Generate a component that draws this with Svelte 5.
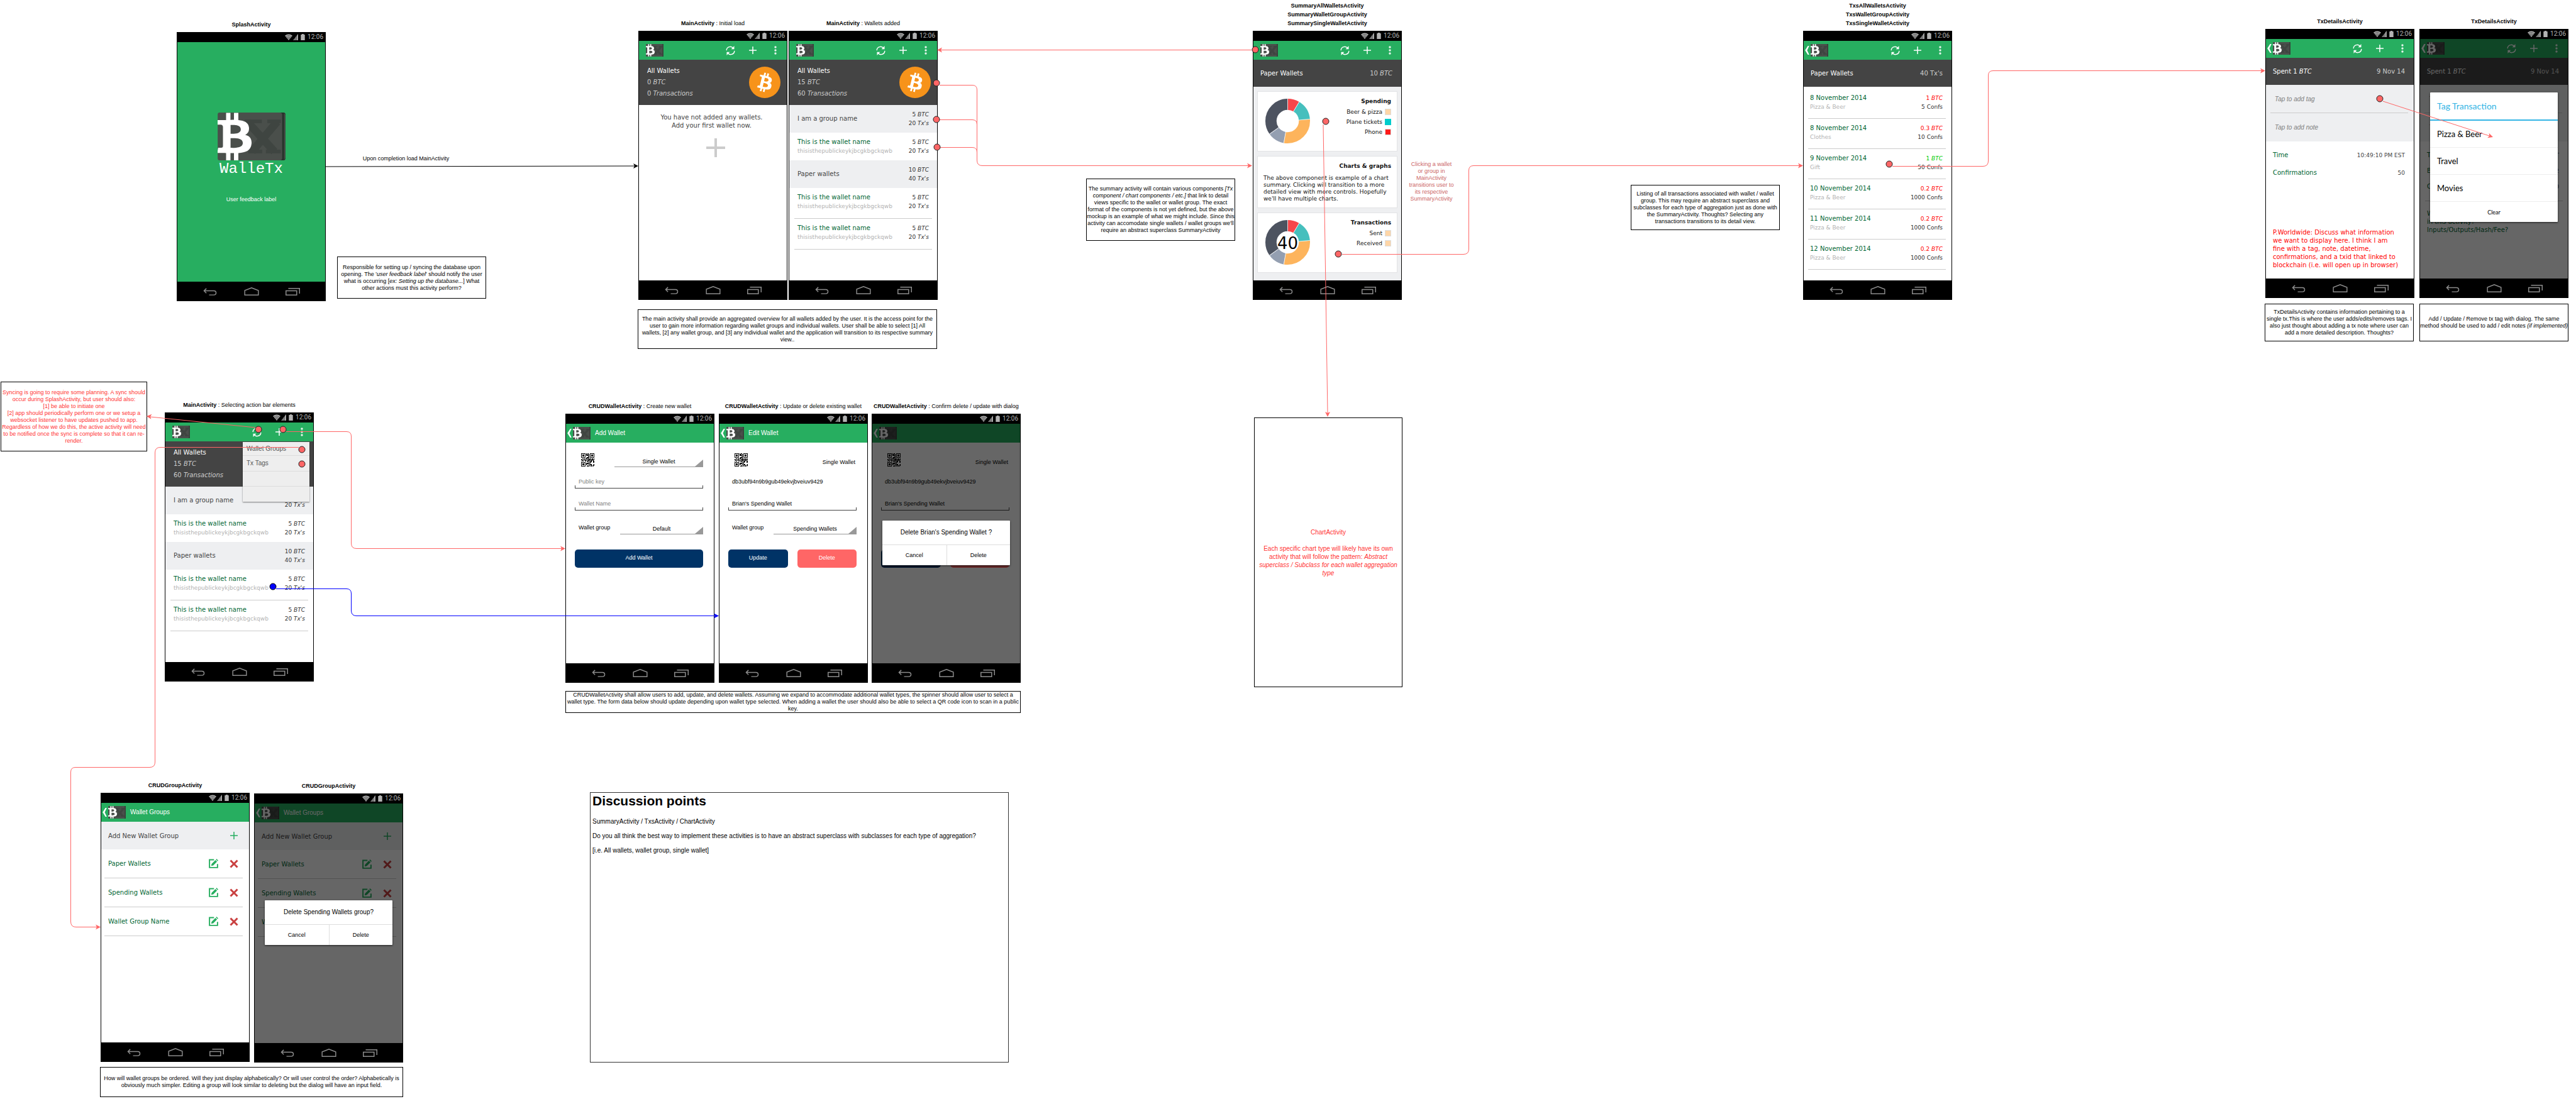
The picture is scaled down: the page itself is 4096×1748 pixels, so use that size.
<script>
  // Places a board item on the free canvas.
  const at = (x, y, w, h) =>
    `left:${x}px;top:${y}px` + (w ? `;width:${w}px` : '') + (h ? `;min-height:${h}px` : '');

  const publicKey = 'thisisthepublickeykjbcgkbgckqwb';
  const walletName = 'This is the wallet name';

  const walletRows = [
    { group: true, name: 'I am a group name', btc: 5, txs: 20 },
    { name: walletName, key: publicKey, btc: 5, txs: 20 },
    { group: true, name: 'Paper wallets', btc: 10, txs: 40 },
    { name: walletName, key: publicKey, btc: 5, txs: 20, ruled: true },
    { name: walletName, key: publicKey, btc: 5, txs: 20, ruled: true }
  ];

  const transactions = [
    { date: '8 November 2014', tag: 'Pizza & Beer', btc: '1', confs: 5 },
    { date: '8 November 2014', tag: 'Clothes', btc: '0.3', confs: 10 },
    { date: '9 November 2014', tag: 'Gift', btc: '1', confs: 50, received: true },
    { date: '10 November 2014', tag: 'Pizza & Beer', btc: '0.2', confs: 1000 },
    { date: '11 November 2014', tag: 'Pizza & Beer', btc: '0.2', confs: 1000 },
    { date: '12 November 2014', tag: 'Pizza & Beer', btc: '0.2', confs: 1000 }
  ];

  const groups = ['Paper Wallets', 'Spending Wallets', 'Wallet Group Name'];
  const tags = ['Pizza & Beer', 'Travel', 'Movies'];

  // Donut slices in degrees, clockwise from the top.
  const slices = [
    { from: 0, to: 31, color: '#f7464a' },
    { from: 31, to: 85, color: '#46bfbd' },
    { from: 85, to: 190, color: '#fdb45c' },
    { from: 190, to: 234, color: '#949fb1' },
    { from: 234, to: 360, color: '#4d5360' }
  ];

  // 21 x 21 QR symbol: three finder squares and a fixed scatter of modules.
  const finder = (x, y) => {
    for (const [fx, fy] of [[0, 0], [14, 0], [0, 14]]) {
      const dx = x - fx;
      const dy = y - fy;
      if (dx >= -1 && dx <= 7 && dy >= -1 && dy <= 7) {
        const ring = Math.max(Math.abs(dx - 3), Math.abs(dy - 3));
        return ring === 3 || ring <= 1 ? 1 : 0;
      }
    }
    return -1;
  };
  let qrPath = '';
  for (let y = 0; y < 21; y++) {
    for (let x = 0; x < 21; x++) {
      const f = finder(x, y);
      if (f === 1 || (f === -1 && (x * 7 + y * 13 + ((x * y * 5) % 11)) % 5 < 3)) {
        qrPath += `M${x} ${y}h1v1h-1z`;
      }
    }
  }

  const coral = '#ff6666';
  const lines = [
    { d: 'M518 265L1009 264', color: '#000', tip: [1015, 264, 0] },
    { d: 'M1990 79.5H1496', color: coral, tip: [1490, 79.5, 180] },
    { d: 'M1494 135.5H1546Q1553.5 135.5 1553.5 143V255Q1553.5 263.5 1562 263.5H1985', color: coral, tip: [1991, 263.5, 0] },
    { d: 'M1494 190.5H1546Q1553.5 190.5 1553.5 198', color: coral },
    { d: 'M1494 234.5H1546Q1553.5 234.5 1553.5 242', color: coral },
    { d: 'M2104 198L2111 657', color: coral, tip: [2111, 663, 90] },
    { d: 'M2134 404.5H2327Q2335.5 404.5 2335.5 396V271Q2335.5 263.5 2343 263.5H2861', color: coral, tip: [2867, 263.5, 0] },
    { d: 'M3009 264.5H3153Q3161.5 264.5 3161.5 256V120Q3161.5 112.5 3169 112.5H3596', color: coral, tip: [3602, 112.5, 0] },
    { d: 'M3789 161L3958 216', color: coral, tip: [3964, 218, 18] },
    { d: 'M406 680L239 663', color: coral, tip: [233, 662, 186] },
    { d: 'M455 686.5H551Q558.5 686.5 558.5 694V864Q558.5 872.5 567 872.5H893', color: coral, tip: [899, 872.5, 0] },
    { d: 'M475 711.5H255Q246.5 711.5 246.5 720V1212Q246.5 1220.5 238 1220.5H120Q112.5 1220.5 112.5 1228V1466Q112.5 1474.5 121 1474.5H154', color: coral, tip: [160, 1474.5, 0] },
    { d: 'M439 936.5H551Q558.5 936.5 558.5 944V971Q558.5 979.5 567 979.5H1137', color: '#0000ff', tip: [1143, 979.5, 0] }
  ];

  const dots = [
    [1489, 132], [1489, 190], [1490, 234], [1996, 79], [2108, 193], [2128, 404],
    [3004, 261], [3784, 157], [411, 683], [450, 683], [480, 715], [480, 738]
  ];
</script>

{#snippet bitcoin()}
  <path
    fill="#fff"
    d="M23.189 14.02c.314-2.096-1.283-3.223-3.465-3.975l.708-2.84-1.728-.43-.69 2.765c-.454-.114-.92-.22-1.385-.326l.695-2.783L15.596 6l-.708 2.839c-.376-.086-.746-.17-1.104-.26l.002-.009-2.384-.595-.46 1.846s1.283.294 1.256.312c.7.175.826.638.805 1.006l-.806 3.235c.048.012.11.03.18.057l-.183-.045-1.13 4.532c-.086.212-.303.531-.793.41.018.025-1.256-.313-1.256-.313l-.858 1.978 2.25.561c.418.105.828.215 1.231.318l-.715 2.872 1.727.43.708-2.84c.472.127.93.245 1.378.357l-.706 2.828 1.728.43.715-2.866c2.948.558 5.164.333 6.097-2.333.752-2.146-.037-3.385-1.588-4.192 1.13-.26 1.98-1.003 2.207-2.538zm-3.95 5.538c-.533 2.147-4.148.986-5.32.695l.95-3.805c1.172.293 4.929.872 4.37 3.11zm.535-5.569c-.487 1.953-3.495.96-4.47.717l.86-3.45c.975.243 4.118.696 3.61 2.733z"
  />
{/snippet}

{#snippet logo()}
  <svg class="logo" viewBox="0 0 146 103" aria-hidden="true">
    <rect width="146" height="103" rx="4" fill="#4a4f4b" />
    <path d="M134 0h7q5 0 5 5v93q0 5-5 5h-7q5 0 5-5V5q0-5-5-5z" fill="#27332b" />
    <path d="M143 2q3 1 3 4v91q0 3-3 4z" fill="#454a46" />
    <path
      d="M64 20L122 84M128 20L74 84"
      stroke="#3f4541"
      stroke-width="17"
      fill="none"
    />
    <path d="M58 15h37v8H58zM107 15h29v8h-29zM66 80h30v8H66zM104 80h32v8h-32z" fill="#3f4541" />
    <g transform="translate(33 51.5) scale(5.3) rotate(-14) translate(-16 -16)">
      {@render bitcoin()}
    </g>
  </svg>
{/snippet}

{#snippet coin()}
  <svg class="coin" viewBox="0 0 32 32" role="img" aria-label="Bitcoin">
    <circle cx="16" cy="16" r="16" fill="#f7931a" />
    {@render bitcoin()}
  </svg>
{/snippet}

{#snippet statusBar()}
  <div class="status">
    <svg width="12" height="10" viewBox="0 0 16 13" aria-hidden="true">
      <path d="M0 3.4Q8-2.6 16 3.4L8 13z" fill="#b3b3b3" />
      <path d="M1.8 5.6Q8 1.2 14.2 5.6M3.6 7.9Q8 4.8 12.4 7.9M5.5 10Q8 8.4 10.5 10" fill="none" stroke="#000" stroke-width=".8" />
    </svg>
    <svg width="8" height="10" viewBox="0 0 10 13" aria-hidden="true">
      <path d="M0 13L10 0V13z" fill="#b3b3b3" />
      <path d="M2.4 0v13M4.6 0v13M6.8 0v13" stroke="#000" stroke-width=".7" />
    </svg>
    <svg class="battery" width="7" height="10" viewBox="0 0 9 14" aria-hidden="true">
      <path d="M2.5 0h4v1.5H9V14H0V1.5h2.5z" fill="#b3b3b3" />
    </svg>
    <span>12:06</span>
  </div>
{/snippet}

{#snippet navBar()}
  <nav class="nav" aria-label="System">
    <button aria-label="Back">
      <svg width="22" height="12" viewBox="0 0 30 16"><path d="M7 1L2 6L7 11M2 6H23Q28 6 28 10.500T23 15H13" /></svg>
    </button>
    <button aria-label="Home">
      <svg width="24" height="13" viewBox="0 0 32 18"><path d="M1 17V7L16 1L31 7V17Z" /></svg>
    </button>
    <button aria-label="Recent apps">
      <svg width="23" height="12" viewBox="0 0 31 16"><path d="M1 6H24V15H1ZM6 1H30V12" /></svg>
    </button>
  </nav>
{/snippet}

{#snippet actionBar(title, back, tools)}
  <header class="action">
    <button class="home" class:back aria-label={back ? 'Up' : 'WalleTx'}>
      {#if back}
        <svg width="7" height="14" viewBox="0 0 9 19" aria-hidden="true">
          <path d="M9 0H6L0 9.500L6 19H9L4.500 9.500z" fill="#fff" />
        </svg>
      {/if}
      {@render logo()}
    </button>
    {#if title}<h3>{title}</h3>{/if}
    {#if tools}
      <div class="tools">
        <button aria-label="Refresh">
          <svg width="15" height="15" viewBox="0 0 20 20">
            <path d="M1.500 9.500Q2 2.500 9 1.800Q13 1.500 16 5M18.500 10.500Q18 17.500 11 18.200Q7 18.500 4 15" fill="none" stroke="#fff" stroke-width="1.900" />
            <path d="M18 0V7H11.500zM2 20V13H8.500z" fill="#fff" />
          </svg>
        </button>
        <button aria-label="Add">
          <svg width="12" height="12" viewBox="0 0 12 12"><path d="M6 0V12M0 6H12" stroke="#fff" stroke-width="1.500" /></svg>
        </button>
        <button aria-label="More">
          <svg width="4" height="14" viewBox="0 0 4 14" fill="#e6f5ec">
            <circle cx="2" cy="2" r="1.700" /><circle cx="2" cy="7" r="1.700" /><circle cx="2" cy="12" r="1.700" />
          </svg>
        </button>
      </div>
    {/if}
  </header>
{/snippet}

{#snippet totals(btc, txs)}
  <section class="totals">
    <div>
      <p class="strong">All Wallets</p>
      <p>{btc} <em>BTC</em></p>
      <p>{txs} <em>Transactions</em></p>
    </div>
    {@render coin()}
  </section>
{/snippet}

{#snippet walletList()}
  <ul class="rows">
    {#each walletRows as row}
      <li class:group={row.group} class:ruled={row.ruled}>
        <div class="lead">
          <span class="name">{row.name}</span>
          {#if row.key}<span class="sub">{row.key}</span>{/if}
        </div>
        <div class="figures">
          <span>{row.btc} <em>BTC</em></span>
          <span>{row.txs} <em>Tx's</em></span>
        </div>
      </li>
    {/each}
  </ul>
{/snippet}

{#snippet donut(label)}
  <div class="donut">
    <svg width="71" height="71" viewBox="0 0 96 96" aria-hidden="true">
      {#each slices as s}
        <circle
          cx="48" cy="48" r="36" fill="none" stroke={s.color} stroke-width="24" pathLength="360"
          stroke-dasharray="{s.to - s.from} 360" stroke-dashoffset={-s.from} transform="rotate(-90 48 48)"
        />
      {/each}
      {#each slices as s}
        <path d="M48 0V24" stroke="#fff" stroke-width="1" transform="rotate({s.from} 48 48)" />
      {/each}
    </svg>
    {#if label}<strong>{label}</strong>{/if}
  </div>
{/snippet}

{#snippet qr()}
  <svg class="qr" viewBox="0 0 21 21" role="img" aria-label="Scan QR code"><path d={qrPath} /></svg>
{/snippet}

{#snippet groupList()}
  <div class="addgroup">
    <span>Add New Wallet Group</span>
    <button aria-label="Add wallet group">
      <svg width="12" height="12" viewBox="0 0 12 12"><path d="M6 0V12M0 6H12" stroke="#27ae60" stroke-width="1.500" /></svg>
    </button>
  </div>
  <ul class="groups">
    {#each groups as name}
      <li>
        <span>{name}</span>
        <button aria-label="Edit {name}">
          <svg width="15" height="15" viewBox="0 0 20 20">
            <path d="M11 2H1.500V18.500H18.500V11" fill="none" stroke="#27ae60" stroke-width="2.600" />
            <path d="M5 15l1-4.500L14 2.500l3.500 3.500L9.500 14zM15 1.500L16.500 0 20 3.500 18.500 5z" fill="#27ae60" />
          </svg>
        </button>
        <button aria-label="Delete {name}">
          <svg width="14" height="14" viewBox="0 0 14 14"><path d="M1.500 1.500L12.500 12.500M12.500 1.500L1.500 12.500" stroke="#c94040" stroke-width="3" /></svg>
        </button>
      </li>
    {/each}
  </ul>
{/snippet}

{#snippet confirm(question)}
  <div class="dialog" role="dialog" aria-label={question}>
    <p>{question}</p>
    <div class="choices">
      <button>Cancel</button>
      <button>Delete</button>
    </div>
  </div>
{/snippet}

{#snippet editForm(id)}
  <form class="form">
    <div class="kind">
      {@render qr()}
      <span>Single Wallet</span>
    </div>
    <output class="field plain">db3ubf94n9b9gub49ekvjbveiuv9429</output>
    <div class="field">
      <input aria-label="Wallet name" value="Brian's Spending Wallet" />
    </div>
    <div class="pick">
      <label for={id}>Wallet group</label>
      <div class="select narrow"><select {id}><option>Spending Wallets</option></select></div>
    </div>
    <div class="buttons">
      <button type="button" class="primary">Update</button>
      <button type="button" class="danger">Delete</button>
    </div>
  </form>
{/snippet}

{#snippet txHeader(left, unit, right, rightUnit)}
  <section class="txheader">
    <span>{left}{#if unit}&nbsp;<em>{unit}</em>{/if}</span>
    <span class="muted">{right}{#if rightUnit}&nbsp;<em>{rightUnit}</em>{/if}</span>
  </section>
{/snippet}

<main class="board">
  <!-- Splash -->
  <figure class="screen" style={at(281, 32)}>
    <figcaption><b>SplashActivity</b></figcaption>
    <div class="phone">
      {@render statusBar()}
      <div class="splash">
        {@render logo()}
        <h1>WalleTx</h1>
        <p>User feedback label</p>
      </div>
      {@render navBar()}
    </div>
  </figure>
  <p class="label" style={at(527, 247, 237)}>Upon completion load MainActivity</p>
  <div class="note" style={at(536, 408, 237, 67)}>
    <p>
      Responsible for setting up / syncing the database upon<br />
      opening. The '<em>user feedback label</em>' should notify the user<br />
      what is occurring [<em>ex: Setting up the database...</em>] What<br />
      other actions must this activity perform?
    </p>
  </div>

  <!-- Main -->
  <figure class="screen" style={at(1015, 30)}>
    <figcaption><b>MainActivity</b> : Initial load</figcaption>
    <div class="phone">
      {@render statusBar()}
      {@render actionBar('', false, true)}
      {@render totals(0, 0)}
      <div class="empty">
        <p>You have not added any wallets.<br />Add your first wallet now.</p>
        <button aria-label="Add wallet">
          <svg width="30" height="30" viewBox="0 0 30 30"><path d="M15 0V30M0 15H30" stroke="#ccc" stroke-width="4" /></svg>
        </button>
      </div>
      {@render navBar()}
    </div>
  </figure>
  <figure class="screen" style={at(1254, 30)}>
    <figcaption><b>MainActivity</b> : Wallets added</figcaption>
    <div class="phone">
      {@render statusBar()}
      {@render actionBar('', false, true)}
      {@render totals(15, 60)}
      {@render walletList()}
      {@render navBar()}
    </div>
  </figure>
  <div class="note" style={at(1014, 492, 476, 63)}>
    <p>
      The main activity shall provide an aggregated overview for all wallets added by the user. It is the access point for the<br />
      user to gain more information regarding wallet groups and individual wallets. User shall be able to select [1] All<br />
      wallets, [2] any wallet group, and [3] any individual wallet and the application will transition to its respective summary<br />
      view..
    </p>
  </div>

  <!-- Summary -->
  <figure class="screen" style={at(1992, 2)}>
    <figcaption class="stack">
      <b>SummaryAllWalletsActivity</b>
      <b>SummaryWalletGroupActivity</b>
      <b>SummarySingleWalletActivity</b>
    </figcaption>
    <div class="phone">
      {@render statusBar()}
      {@render actionBar('', false, true)}
      {@render txHeader('Paper Wallets', '', '10', 'BTC')}
      <div class="cards">
        <section class="card chart">
          {@render donut('')}
          <div class="legend">
            <h4>Spending</h4>
            <ul>
              <li>Beer &amp; pizza<i class="peach"></i></li>
              <li>Plane tickets<i class="cyan"></i></li>
              <li>Phone<i class="red"></i></li>
            </ul>
          </div>
        </section>
        <section class="card text">
          <h4>Charts &amp; graphs</h4>
          <p>
            The above component is example of a chart<br />
            summary. Clicking will transition to a more<br />
            detailed view with more controls. Hopefully<br />
            we'll have multiple charts.
          </p>
        </section>
        <section class="card chart">
          {@render donut('40')}
          <div class="legend">
            <h4>Transactions</h4>
            <ul>
              <li>Sent<i class="peach"></i></li>
              <li>Received<i class="peach"></i></li>
            </ul>
          </div>
        </section>
      </div>
      {@render navBar()}
    </div>
  </figure>
  <div class="note" style={at(1727, 284, 237, 99)}>
    <p>
      The summary activity will contain various components <em>[Tx</em><br />
      <em>component / chart components / etc.]</em> that link to detail<br />
      views specific to the wallet or wallet group. The exact<br />
      format of the components is not yet defined, but the above<br />
      mockup is an example of what we might include. Since this<br />
      activity can accomodate single wallets / wallet groups we'll<br />
      require an abstract superclass SummaryActivity
    </p>
  </div>
  <p class="label rose" style={at(2226, 256, 100)}>
    Clicking a wallet<br />or group in<br />MainActivity<br />transitions user to<br />its respective<br />SummaryActivity
  </p>

  <!-- Transactions -->
  <figure class="screen" style={at(2867, 2)}>
    <figcaption class="stack">
      <b>TxsAllWalletsActivity</b>
      <b>TxsWalletGroupActivity</b>
      <b>TxsSingleWalletActivity</b>
    </figcaption>
    <div class="phone">
      {@render statusBar()}
      {@render actionBar('', true, true)}
      {@render txHeader('Paper Wallets', '', "40 Tx's", '')}
      <ul class="rows txs">
        {#each transactions as tx}
          <li class="ruled">
            <div class="lead">
              <span class="name">{tx.date}</span>
              <span class="sub">{tx.tag}</span>
            </div>
            <div class="figures">
              <span class={tx.received ? 'in' : 'out'}>{tx.btc} <em>BTC</em></span>
              <span>{tx.confs} Confs</span>
            </div>
          </li>
        {/each}
      </ul>
      {@render navBar()}
    </div>
  </figure>
  <div class="note" style={at(2593, 294, 237, 72)}>
    <p>
      Listing of all transactions associated with wallet / wallet<br />
      group. This may require an abstract superclass and<br />
      subclasses for each type of aggregation just as done with<br />
      the SummaryActivity. Thoughts? Selecting any<br />
      transactions transitions to its detail view.
    </p>
  </div>

  <!-- Transaction details -->
  <figure class="screen" style={at(3602, 27)}>
    <figcaption><b>TxDetailsActivity</b></figcaption>
    <div class="phone">
      {@render statusBar()}
      {@render actionBar('', true, true)}
      {@render txHeader('Spent 1', 'BTC', '9 Nov 14', '')}
      <div class="taps">
        <input aria-label="Tag" placeholder="Tap to add tag" />
        <input aria-label="Note" placeholder="Tap to add note" />
      </div>
      <dl class="facts">
        <div><dt>Time</dt><dd>10:49:10 PM EST</dd></div>
        <div><dt>Confirmations</dt><dd>50</dd></div>
      </dl>
      <p class="remark">
        P.Worldwide: Discuss what information<br />
        we want to display here. I think I am<br />
        fine with a tag, note, datetime,<br />
        confirmations, and a txid that linked to<br />
        blockchain (i.e. will open up in browser)
      </p>
      {@render navBar()}
    </div>
  </figure>
  <figure class="screen" style={at(3847, 27)}>
    <figcaption><b>TxDetailsActivity</b></figcaption>
    <div class="phone">
      {@render statusBar()}
      {@render actionBar('', true, true)}
      {@render txHeader('Spent 1', 'BTC', '9 Nov 14', '')}
      <div class="taps">
        <input aria-label="Tag" placeholder="Tap to add tag" />
        <input aria-label="Note" placeholder="Tap to add note" />
      </div>
      <dl class="facts tight">
        <div><dt>Time</dt><dd>10:49:10 PM EST</dd></div>
        <div><dt>Block</dt><dd>2</dd></div>
        <div><dt>Confirmations</dt><dd>50</dd></div>
      </dl>
      <p class="query">What do we display<br />in this activity?<br />Inputs/Outputs/Hash/Fee?</p>
      {@render navBar()}
      <div class="shade">
        <div class="dialog tagger" role="dialog" aria-label="Tag Transaction">
          <h4>Tag Transaction</h4>
          {#each tags as tag}<button class="tag">{tag}</button>{/each}
          <button class="clear">Clear</button>
        </div>
      </div>
    </div>
  </figure>
  <div class="note" style={at(3601, 483, 237, 60)}>
    <p>
      TxDetailsActivity contains information pertaining to a<br />
      single tx.This is where the user adds/edits/removes tags. I<br />
      also just thought about adding a tx note where user can<br />
      add a more detailed description. Thoughts?
    </p>
  </div>
  <div class="note" style={at(3847, 483, 237, 60)}>
    <p>
      Add / Update / Remove tx tag with dialog. The same<br />
      method should be used to add / edit notes <em>(if implemented)</em>
    </p>
  </div>

  <!-- Chart -->
  <div class="note chartbox" style={at(1994, 664, 236, 429)}>
    <p>
      ChartActivity<br /><br />
      Each specific chart type will likely have its own<br />
      activity that will follow the pattern: <em>Abstract</em><br />
      <em>superclass / Subclass for each wallet aggregation</em><br />
      <em>type</em>
    </p>
  </div>

  <!-- Main with overflow menu -->
  <div class="note alert" style={at(1, 607, 233, 111)}>
    <p>
      Syncing is going to require some planning. A sync should<br />
      occur during SplashActivity, but user should also:<br />
      [1] be able to initiate one<br />
      [2] app should periodically perform one or we setup a<br />
      websocket listener to have updates pushed to app.<br />
      Regardless of how we do this, the active activity will need<br />
      to be notified once the sync is complete so that it can re-<br />
      render.
    </p>
  </div>
  <figure class="screen" style={at(262, 637)}>
    <figcaption><b>MainActivity</b> : Selecting action bar elements</figcaption>
    <div class="phone">
      {@render statusBar()}
      {@render actionBar('', false, true)}
      {@render totals(15, 60)}
      {@render walletList()}
      {@render navBar()}
      <div class="menu">
        <button>Wallet Groups</button>
        <button>Tx Tags</button>
        <span></span>
        <span></span>
      </div>
    </div>
  </figure>

  <!-- Wallet create, edit, delete -->
  <figure class="screen" style={at(899, 639)}>
    <figcaption><b>CRUDWalletActivity</b> : Create new wallet</figcaption>
    <div class="phone">
      {@render statusBar()}
      {@render actionBar('Add Wallet', true, false)}
      <form class="form">
        <div class="kind">
          {@render qr()}
          <div class="select"><select aria-label="Wallet type"><option>Single Wallet</option></select></div>
        </div>
        <div class="field"><input aria-label="Public key" placeholder="Public key" /></div>
        <div class="field"><input aria-label="Wallet name" placeholder="Wallet Name" /></div>
        <div class="pick">
          <label for="new-group">Wallet group</label>
          <div class="select narrow"><select id="new-group"><option>Default</option></select></div>
        </div>
        <div class="buttons"><button type="button" class="primary">Add Wallet</button></div>
      </form>
      {@render navBar()}
    </div>
  </figure>
  <figure class="screen" style={at(1143, 639)}>
    <figcaption><b>CRUDWalletActivity</b> : Update or delete existing wallet</figcaption>
    <div class="phone">
      {@render statusBar()}
      {@render actionBar('Edit Wallet', true, false)}
      {@render editForm('edit-group')}
      {@render navBar()}
    </div>
  </figure>
  <figure class="screen" style={at(1386, 639)}>
    <figcaption><b>CRUDWalletActivity</b> : Confirm delete / update with dialog</figcaption>
    <div class="phone">
      {@render statusBar()}
      {@render actionBar('', true, false)}
      {@render editForm('confirm-group')}
      {@render navBar()}
      <div class="shade">{@render confirm("Delete Brian's Spending Wallet ?")}</div>
    </div>
  </figure>
  <div class="note" style={at(899, 1099, 724, 34)}>
    <p>
      CRUDWalletActivity shall allow users to add, update, and delete wallets. Assuming we expand to accommodate additional wallet types, the spinner should allow user to select a<br />
      wallet type. The form data below should update depending upon wallet type selected. When adding a wallet the user should also be able to select a QR code icon to scan in a public<br />
      key.
    </p>
  </div>

  <!-- Groups -->
  <figure class="screen" style={at(160, 1242)}>
    <figcaption><b>CRUDGroupActivity</b></figcaption>
    <div class="phone">
      {@render statusBar()}
      {@render actionBar('Wallet Groups', true, false)}
      {@render groupList()}
      {@render navBar()}
    </div>
  </figure>
  <figure class="screen" style={at(404, 1243)}>
    <figcaption><b>CRUDGroupActivity</b></figcaption>
    <div class="phone">
      {@render statusBar()}
      {@render actionBar('Wallet Groups', true, false)}
      {@render groupList()}
      {@render navBar()}
      <div class="shade">{@render confirm('Delete Spending Wallets group?')}</div>
    </div>
  </figure>
  <div class="note" style={at(159, 1697, 482, 48)}>
    <p>
      How will wallet groups be ordered. Will they just display alphabetically? Or will user control the order? Alphabetically is<br />
      obviously much simpler. Editing a group will look similar to deleting but the dialog will have an input field.
    </p>
  </div>

  <!-- Discussion -->
  <section class="discussion" style={at(938, 1260, 666, 430)}>
    <h2>Discussion points</h2>
    <p>SummaryActivity / TxsActivity / ChartActivity</p>
    <p>Do you all think the best way to implement these activities is to have an abstract superclass with subclasses for each type of aggregation?</p>
    <p>[i.e. All wallets, wallet group, single wallet]</p>
  </section>

  <svg class="links" aria-hidden="true">
    {#each lines as l}
      <path d={l.d} fill="none" stroke={l.color} />
      {#if l.tip}
        <path d="M0 0L-8 -4L-6 0L-8 4Z" fill={l.color} transform="translate({l.tip[0]} {l.tip[1]}) rotate({l.tip[2]})" />
      {/if}
    {/each}
    {#each dots as [x, y]}
      <circle cx={x} cy={y} r="5" fill={coral} stroke="#222" />
    {/each}
    <circle cx="434" cy="933" r="5" fill="#0000ff" stroke="#000" />
  </svg>
</main>

<style>
  :global(body) {
    background: #fff;
  }

  .board {
    position: relative;
    min-height: 1748px;
    overflow: hidden;
    background: #fff;
    color: #000;
    font: 9px/11px 'Liberation Sans', Arial, sans-serif;
    white-space: nowrap;
  }

  .board * {
    box-sizing: border-box;
  }

  p, h1, h2, h3, h4, ul, dl, dd, figure {
    margin: 0;
    padding: 0;
  }

  ul {
    list-style: none;
  }

  button, input, select {
    margin: 0;
    padding: 0;
    border: 0;
    background: none;
    color: inherit;
    font: inherit;
  }

  svg {
    display: block;
  }

  .links {
    position: absolute;
    inset: 0;
    width: 100%;
    height: 100%;
    pointer-events: none;
  }

  .label {
    position: absolute;
    text-align: center;
  }

  .rose {
    color: #cc6666;
  }

  .note {
    position: absolute;
    display: flex;
    align-items: center;
    justify-content: center;
    border: 1px solid #000;
    text-align: center;
  }

  .alert {
    color: #ff3333;
  }

  .chartbox {
    color: #ff3333;
    font-size: 10px;
    line-height: 13px;
  }

  .discussion {
    position: absolute;
    padding: 0 3px;
    border: 1px solid #333;
    font-size: 10px;
    line-height: 12px;
  }

  .discussion h2 {
    margin-bottom: 14px;
    font-size: 21px;
    line-height: 26px;
  }

  .discussion p {
    margin-bottom: 11px;
  }

  /* Phone shell */
  .screen {
    position: absolute;
    width: 237px;
  }

  figcaption {
    display: flex;
    justify-content: center;
    margin-bottom: 5px;
    line-height: 14px;
    white-space: pre;
  }

  .stack {
    flex-direction: column;
    align-items: center;
  }

  .phone {
    position: relative;
    display: flex;
    flex-direction: column;
    min-height: 428px;
    border: solid #000;
    border-width: 0 1px;
    background: #fff;
    color: #444;
    font-family: 'DejaVu Sans', Verdana, sans-serif;
  }

  .status {
    display: flex;
    align-items: center;
    justify-content: flex-end;
    gap: 1px;
    height: 16px;
    padding-right: 3px;
    background: #000;
    color: #b3b3b3;
    font: 10px/16px Roboto, sans-serif;
  }

  .battery {
    margin: 0 3px;
  }

  .nav {
    display: grid;
    grid-template-columns: repeat(3, 66px);
    justify-content: center;
    align-items: center;
    height: 31px;
    margin-top: auto;
    background: #000;
  }

  .nav svg {
    margin: auto;
    fill: none;
    stroke: #8c8c8c;
    stroke-width: 2;
  }

  .action {
    display: flex;
    align-items: center;
    height: 30px;
    background: #27ae60;
    color: #fff;
  }

  .home {
    display: flex;
    align-items: center;
    gap: 2px;
    padding-left: 11px;
  }

  .home.back {
    padding-left: 2px;
  }

  .logo {
    width: 28px;
    height: 20px;
    overflow: hidden;
  }

  .action h3 {
    margin-left: 7px;
    font: 10px/12px 'Liberation Sans', Arial, sans-serif;
  }

  .tools {
    display: flex;
    margin-left: auto;
  }

  .tools button {
    display: grid;
    place-items: center;
    width: 36px;
    height: 30px;
  }

  /* Splash */
  .splash {
    display: flex;
    flex: 1;
    flex-direction: column;
    align-items: center;
    padding-top: 112px;
    background: #27ae60;
    color: #fff;
    font-family: 'Liberation Sans', Arial, sans-serif;
  }

  .splash .logo {
    width: 108px;
    height: 76px;
  }

  .splash h1 {
    margin: 2px 0 31px;
    font: 24px/24px 'Liberation Mono', monospace;
  }

  /* Main */
  .totals {
    display: flex;
    align-items: center;
    justify-content: space-between;
    height: 72px;
    padding: 0 10px 0 13px;
    background: #444;
    color: #ccc;
    font-size: 10px;
    line-height: 18px;
  }

  .totals .strong {
    color: #fff;
  }

  .coin {
    width: 50px;
    height: 50px;
  }

  .empty {
    display: flex;
    flex-direction: column;
    align-items: center;
    gap: 14px;
    padding: 13px 4px 0 0;
    font-size: 10px;
    line-height: 13px;
    text-align: center;
  }

  .empty button {
    margin-left: 12px;
  }

  .rows li {
    display: flex;
    justify-content: space-between;
    height: 44px;
    padding: 8px 13px;
    line-height: 14px;
  }

  .rows li.group {
    align-items: center;
    background: #eeeff1;
  }

  .rows li.ruled {
    height: 49px;
    margin: 0 8px;
    padding: 8px 5px;
    border-bottom: 1px solid #ccc;
  }

  .lead, .figures {
    display: flex;
    flex-direction: column;
  }

  .figures {
    align-items: flex-end;
    color: #333;
  }

  .name {
    color: #006633;
    font-size: 10px;
  }

  .group .name {
    color: #444;
  }

  .sub {
    color: #b3b3b3;
  }

  .txs {
    padding-top: 3px;
  }

  .rows.txs li {
    height: 48px;
    margin: 0 9px 0 7px;
    padding: 8px 5px 0 3px;
  }

  .out {
    color: #ff0000;
  }

  .in {
    color: #00cc00;
  }

  .menu {
    position: absolute;
    top: 47px;
    right: 6px;
    display: grid;
    grid-template-rows: 22px 25px 24px 24px;
    width: 106px;
    background: #eee;
    box-shadow: 0 1px 2px rgb(0 0 0 / 0.500);
    color: #555;
    font: 10px/12px 'Liberation Sans', Arial, sans-serif;
  }

  .menu > * {
    padding-left: 6px;
    border-bottom: 1px solid #ddd;
    text-align: left;
  }

  .menu > :last-child {
    border-bottom: 0;
  }

  /* Summary */
  .txheader {
    display: flex;
    align-items: center;
    justify-content: space-between;
    height: 43px;
    padding: 0 14px 0 11px;
    background: #444;
    color: #fff;
    font-size: 10px;
  }

  .muted {
    color: #ccc;
  }

  .cards {
    display: flex;
    flex: 1;
    flex-direction: column;
    gap: 7px;
    padding: 7px 6px;
    background: #eeeff1;
    color: #111;
  }

  .card {
    min-height: 96px;
    padding: 8px 9px;
    border: 1px solid #e2e3e5;
    background: #fff;
  }

  .card h4 {
    font-size: 9px;
    line-height: 14px;
    text-align: right;
  }

  .card.text {
    min-height: 81px;
  }

  .card.text p {
    margin-top: 7px;
  }

  .chart {
    display: flex;
    justify-content: space-between;
  }

  .donut {
    position: relative;
    margin: 3px 0 0 3px;
  }

  .donut strong {
    position: absolute;
    inset: 0;
    display: grid;
    place-items: center;
    color: #000;
    font-size: 26px;
    font-weight: 400;
  }

  .legend ul {
    margin-top: 2px;
  }

  .legend li {
    display: flex;
    align-items: center;
    justify-content: flex-end;
    gap: 4px;
    line-height: 16px;
  }

  .legend i {
    width: 10px;
    height: 10px;
    border: 1px solid #ddd;
  }

  .peach {
    background: #ffd6a8;
  }

  .legend .cyan {
    border-color: #00cccc;
    background: #00cccc;
  }

  .red {
    background: #ff1a1a;
  }

  /* Transaction details */
  .taps {
    background: #eeeff1;
  }

  .taps input {
    display: block;
    width: 219px;
    height: 45px;
    margin-left: 7px;
    padding-left: 7px;
    font: italic 10px/12px 'Liberation Sans', Arial, sans-serif;
  }

  .taps input:first-child {
    border-bottom: 1px solid #ccc;
  }

  input::placeholder {
    color: #808080;
    opacity: 1;
  }

  .facts {
    display: grid;
    gap: 14px;
    padding: 15px 14px 0 11px;
  }

  .facts.tight {
    gap: 11px;
  }

  .facts div {
    display: flex;
    justify-content: space-between;
    line-height: 14px;
  }

  dt {
    color: #006633;
    font-size: 10px;
  }

  .remark, .query {
    margin: 81px 0 0 11px;
    color: #ff0000;
    font-size: 10px;
    line-height: 13px;
  }

  .query {
    margin: 15px 8px 0;
    padding: 13px 3px 0;
    border-top: 1px solid #ccc;
    color: #006633;
  }

  /* Dialogs */
  .shade {
    position: absolute;
    inset: 16px 0 31px;
    background: rgb(0 0 0 / 0.600);
  }

  .dialog {
    width: 203px;
    margin: 154px 16px 0;
    border-radius: 1px;
    background: #fff;
    box-shadow: 0 1px 3px rgb(0 0 0 / 0.700);
    color: #000;
    font-family: 'Liberation Sans', Arial, sans-serif;
    text-align: center;
  }

  .dialog p {
    font-size: 10px;
    line-height: 38px;
  }

  .choices {
    display: grid;
    grid-template-columns: 1fr 1fr;
    border-top: 1px solid #ddd;
  }

  .choices button {
    height: 32px;
  }

  .choices button + button {
    border-left: 1px solid #ddd;
  }

  .tagger {
    display: flex;
    flex-direction: column;
    margin-top: 85px;
    font-family: Lato, 'Open Sans', sans-serif;
  }

  .tagger h4 {
    padding-left: 11px;
    border-bottom: 2px solid #33b5e5;
    color: #33b5e5;
    font-size: 14px;
    font-weight: 400;
    line-height: 43px;
    text-align: left;
  }

  .tag {
    height: 43px;
    padding-left: 11px;
    border-bottom: 1px solid #eee;
    font-size: 13px;
    text-align: left;
  }

  .clear {
    height: 32px;
  }

  /* Wallet form */
  .form {
    display: flex;
    flex-direction: column;
    padding: 17px 17px 0 14px;
    color: #000;
    font-family: 'Liberation Sans', Arial, sans-serif;
  }

  .kind {
    display: flex;
    align-items: flex-end;
    justify-content: space-between;
    height: 22px;
    padding-left: 10px;
  }

  .kind > span {
    padding: 0 2px 2px;
  }

  .qr {
    align-self: flex-start;
    width: 21px;
    height: 21px;
  }

  .select {
    position: relative;
    width: 141px;
    border-bottom: 1px solid #999;
  }

  .select.narrow {
    width: 132px;
  }

  .select::after {
    position: absolute;
    right: 0;
    bottom: 0;
    width: 13px;
    height: 11px;
    background: #999;
    clip-path: polygon(100% 0, 100% 100%, 0 100%);
    content: '';
  }

  select {
    display: block;
    width: 100%;
    height: 15px;
    appearance: none;
    text-align: center;
    text-align-last: center;
  }

  .field {
    display: block;
    position: relative;
    height: 19px;
    margin-top: 16px;
    padding-left: 6px;
    line-height: 17px;
  }

  .kind + .field {
    margin-top: 15px;
  }

  .field input {
    width: 100%;
    height: 17px;
  }

  .field:not(.plain)::after {
    position: absolute;
    right: 0;
    bottom: 0;
    left: 0;
    height: 4px;
    border: solid #444;
    border-width: 0 1px 1px;
    content: '';
  }

  .pick {
    display: flex;
    justify-content: space-between;
    height: 16px;
    margin-top: 22px;
    padding-left: 6px;
  }

  .buttons {
    display: flex;
    gap: 15px;
    margin-top: 24px;
  }

  .buttons button {
    flex: 1;
    height: 29px;
    padding-bottom: 3px;
    border-radius: 5px;
    background: #003366;
    color: #fff;
  }

  .buttons .danger {
    background: #ff6666;
  }

  /* Groups */
  .addgroup {
    display: flex;
    align-items: center;
    justify-content: space-between;
    height: 44px;
    padding: 0 18px 0 11px;
    background: #eeeff1;
    font-size: 10px;
  }

  .groups li {
    display: flex;
    align-items: center;
    gap: 18px;
    height: 46px;
    margin: 0 10px 0 5px;
    padding: 0 7px 0 6px;
    border-bottom: 1px solid #ccc;
    color: #006633;
    font-size: 10px;
  }

  .groups span {
    flex: 1;
  }
</style>
